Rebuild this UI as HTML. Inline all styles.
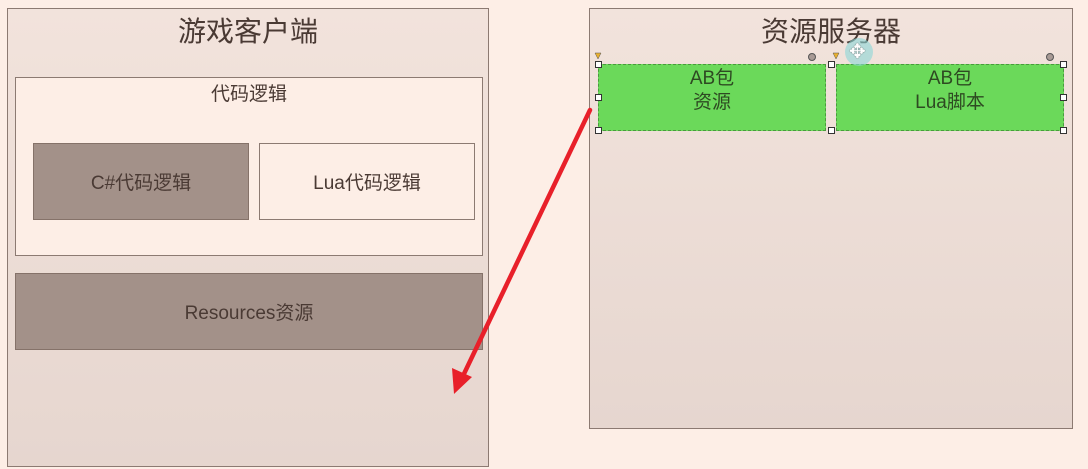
<!DOCTYPE html>
<html><head><meta charset="utf-8"><style>
*{margin:0;padding:0;box-sizing:border-box}
body{width:1088px;height:469px;background:#fdeee6;position:relative;overflow:hidden;font-family:"Liberation Sans","Noto Sans CJK SC",sans-serif;color:#4a3a34}
.a{position:absolute}
.panel{border:1px solid #8c7a72;background:linear-gradient(#f2e3dc,#e6d6cf)}
.t{text-align:center}
.box{display:flex;align-items:center;justify-content:center;font-size:19px}
.g{background:#6bd95a;border:1px dashed #4a9a3e;color:#2e4a22;font-size:19px;line-height:24px;text-align:center;padding-top:2px}
.h{width:7px;height:7px;border:1px solid #333;background:#fff}
</style></head><body>
<div class="a panel" style="left:7px;top:8px;width:482px;height:459px"></div>
<div class="a t" style="left:7px;top:10px;width:482px;font-size:28px">游戏客户端</div>
<div class="a" style="left:15px;top:77px;width:468px;height:179px;border:1px solid #8c7a72;background:#fdeee6"></div>
<div class="a t" style="left:15px;top:79px;width:468px;font-size:19px">代码逻辑</div>
<div class="a box" style="left:33px;top:143px;width:216px;height:77px;background:#a39189;border:1px solid #857269">C#代码逻辑</div>
<div class="a box" style="left:259px;top:143px;width:216px;height:77px;background:#fdeee6;border:1px solid #8c7a72">Lua代码逻辑</div>
<div class="a box" style="left:15px;top:273px;width:468px;height:77px;background:#a39189;border:1px solid #857269">Resources资源</div>

<div class="a panel" style="left:589px;top:8px;width:484px;height:421px"></div>
<div class="a t" style="left:589px;top:10px;width:484px;font-size:28px">资源服务器</div>
<div class="a g" style="left:598px;top:64px;width:228px;height:67px">AB包<br>资源</div>
<div class="a g" style="left:836px;top:64px;width:228px;height:67px">AB包<br>Lua脚本</div>
<div class="a h" style="left:595px;top:61px"></div>
<div class="a h" style="left:595px;top:94px"></div>
<div class="a h" style="left:595px;top:127px"></div>
<div class="a h" style="left:828px;top:61px"></div>
<div class="a h" style="left:828px;top:127px"></div>
<div class="a h" style="left:1060px;top:61px"></div>
<div class="a h" style="left:1060px;top:94px"></div>
<div class="a h" style="left:1060px;top:127px"></div>
<div class="a" style="left:808px;top:53px;width:8px;height:8px;border-radius:50%;background:#a89a95;border:1px solid #555"></div>
<div class="a" style="left:1046px;top:53px;width:8px;height:8px;border-radius:50%;background:#a89a95;border:1px solid #555"></div>
<div class="a" style="left:845px;top:38px;width:28px;height:28px;border-radius:50%;background:rgba(140,215,215,.6)"></div>
<div class="a" style="left:849px;top:39px;font-size:20px;color:#fff;text-shadow:0 0 1px #333">✥</div>
<svg class="a" style="left:0;top:0" width="1088" height="469">
<polygon points="595,53 601,53 598,59" fill="#e8b030" stroke="#555" stroke-width=".5"/>
<polygon points="833,53 839,53 836,59" fill="#e8b030" stroke="#555" stroke-width=".5"/>
<line x1="590" y1="110" x2="462" y2="378" stroke="#e8202a" stroke-width="4.5" stroke-linecap="round"/>
<polygon points="454,394 452,368 472,377" fill="#e8202a"/>
</svg>
</body></html>
